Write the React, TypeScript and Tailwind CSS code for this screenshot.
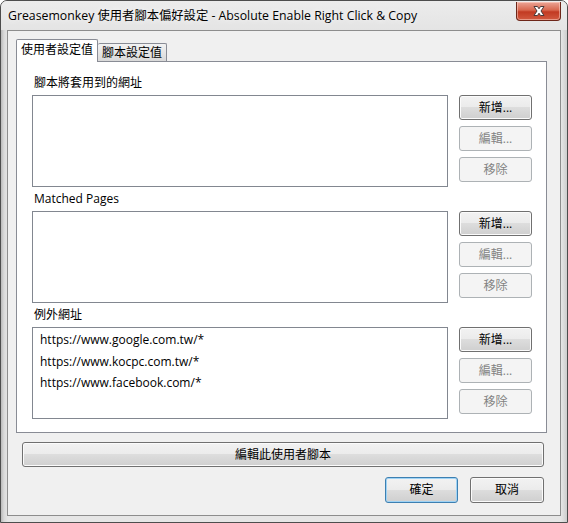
import React from "react";

const font = { fontFamily: '"Open Sans", "Noto Sans CJK TC", sans-serif' };

const urlLists = [
  { label: "腳本將套用到的網址", items: [] as string[] },
  { label: "Matched Pages", items: [] as string[] },
  {
    label: "例外網址",
    items: [
      "https://www.google.com.tw/*",
      "https://www.kocpc.com.tw/*",
      "https://www.facebook.com/*",
    ],
  },
];

function Button({
  children,
  disabled,
  focused,
  className = "",
}: {
  children: React.ReactNode;
  disabled?: boolean;
  focused?: boolean;
  className?: string;
}) {
  if (disabled) {
    return (
      <div
        className={`flex items-center justify-center rounded-[3px] border border-[#adb2b5] bg-[#f4f4f4] text-[12px] text-[#838383] ${className}`}
      >
        {children}
      </div>
    );
  }
  return (
    <div
      className={`flex items-center justify-center rounded-[3px] border text-[12px] text-black ${
        focused
          ? "border-[#3c7fb1] shadow-[inset_0_0_0_1px_#9fd3f5]"
          : "border-[#707070] shadow-[inset_0_0_0_1px_#fbfbfb]"
      } bg-[linear-gradient(#f2f2f2_0%,#ebebeb_50%,#dddddd_50%,#cfcfcf_100%)] ${className}`}
    >
      {children}
    </div>
  );
}

function CloseButton() {
  return (
    <div className="mt-[1px] flex h-[19px] w-[45px] items-center justify-center rounded-b-[4px] border border-t-0 border-[#6d2619] bg-[linear-gradient(#eba596_0%,#d8684f_45%,#c23a22_55%,#d25a40_100%)] shadow-[inset_0_0_0_1px_rgba(255,220,210,0.5)]">
      <svg width="14" height="12" viewBox="0 0 14 12">
        <path
          d="M2 1.5 L5.5 1.5 L7 3.8 L8.5 1.5 L12 1.5 L9 6 L12 10.5 L8.5 10.5 L7 8.2 L5.5 10.5 L2 10.5 L5 6 Z"
          fill="#ffffff"
          stroke="#4a3a3a"
          strokeWidth="1"
          strokeLinejoin="round"
        />
      </svg>
    </div>
  );
}

export default function App() {
  return (
    <div
      className="h-[523px] w-[568px] overflow-hidden rounded-t-[7px] border border-[#4d4d4d] bg-[linear-gradient(90deg,#b9b9b9_0px,#d9d9d9_3px,#e6e6e6_7px,#e6e6e6_560px,#c9c9c9_567px)]"
      style={font}
    >
      {/* title bar */}
      <div className="flex h-[29px] items-start justify-between bg-[linear-gradient(#ececec,#e4e4e4)] pl-[7px] pr-[6px]">
        <div className="pt-[6px] text-[12.3px] leading-[18px] text-black [text-shadow:0_0_6px_#ffffff]">
          Greasemonkey 使用者腳本偏好設定 - Absolute Enable Right Click &amp; Copy
        </div>
        <CloseButton />
      </div>

      {/* dialog body */}
      <div className="mx-[6px] h-[486px] border border-[#8d8d8d] bg-[#f0f0f0] pl-[8px] pt-[7px]">
        {/* tabs */}
        <div className="flex h-[23px] items-end text-[12px]">
          <div className="relative z-10 -mb-[1px] flex h-[23px] w-[82px] items-start justify-center rounded-t-[2px] border border-b-0 border-[#898c95] bg-white pt-[2px] leading-[16px]">
            使用者設定值
          </div>
          <div className="flex h-[18px] w-[69px] items-start justify-center rounded-t-[2px] border border-b-0 border-l-0 border-[#898c95] bg-[linear-gradient(#f2f2f2,#d9d9d9)] pt-[1px] leading-[16px]">
            腳本設定值
          </div>
        </div>

        {/* tab panel */}
        <div className="h-[372px] w-[531px] border border-[#898c95] bg-white pl-[15px] pt-[13px]">
          {urlLists.map((list, i) => (
            <div key={list.label} className={i > 0 ? "mt-[4px]" : ""}>
              <div className="pl-[2px] text-[12px] leading-[16px] text-black">{list.label}</div>
              <div className="mt-[4px] flex">
                <div className="h-[92px] w-[416px] border border-[#828790] bg-white pl-[7px] pt-[1px]">
                  {list.items.map((item) => (
                    <div key={item} className="h-[21.5px] text-[12px] leading-[21px] text-black">
                      {item}
                    </div>
                  ))}
                </div>
                <div className="ml-[11px] flex flex-col gap-[6px]">
                  <Button className="h-[25px] w-[73px]">新增...</Button>
                  <Button disabled className="h-[25px] w-[73px]">
                    編輯...
                  </Button>
                  <Button disabled className="h-[25px] w-[73px]">
                    移除
                  </Button>
                </div>
              </div>
            </div>
          ))}
        </div>

        {/* bottom actions */}
        <Button className="ml-[6px] mt-[9px] h-[25px] w-[522px]">編輯此使用者腳本</Button>
        <div className="mt-[10px] flex w-[528px] justify-end gap-[12px]">
          <Button focused className="h-[26px] w-[73px]">
            確定
          </Button>
          <Button className="h-[26px] w-[74px]">取消</Button>
        </div>
      </div>
    </div>
  );
}
